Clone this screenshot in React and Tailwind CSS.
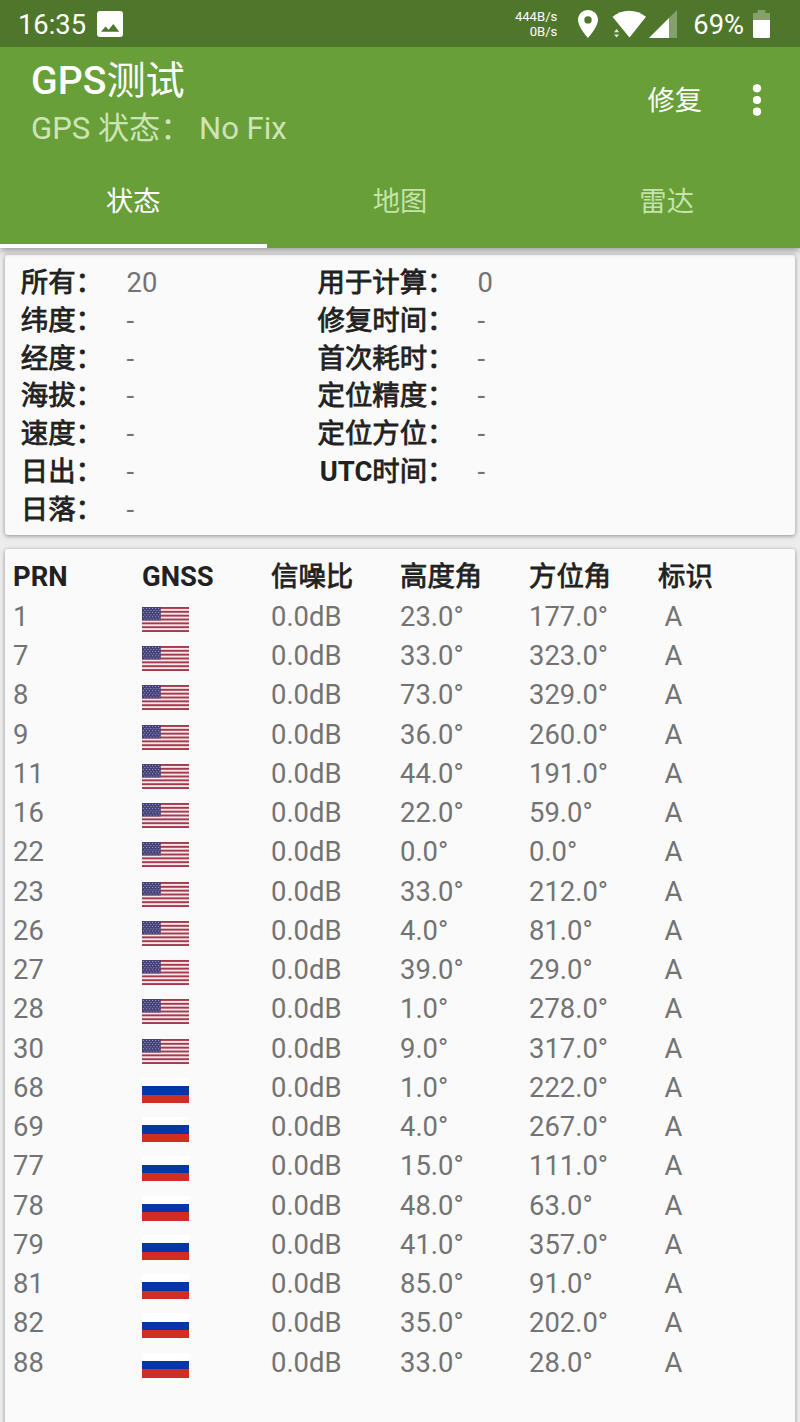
const info = [
  ['所有：', '20', '用于计算：', '0'],
  ['纬度：', '-', '修复时间：', '-'],
  ['经度：', '-', '首次耗时：', '-'],
  ['海拔：', '-', '定位精度：', '-'],
  ['速度：', '-', '定位方位：', '-'],
  ['日出：', '-', '时间：', '-', 'UTC'],
  ['日落：', '-', '', ''],
]

const satellites = [
  { prn: 1, country: 'us', elevation: '23.0°', azimuth: '177.0°' },
  { prn: 7, country: 'us', elevation: '33.0°', azimuth: '323.0°' },
  { prn: 8, country: 'us', elevation: '73.0°', azimuth: '329.0°' },
  { prn: 9, country: 'us', elevation: '36.0°', azimuth: '260.0°' },
  { prn: 11, country: 'us', elevation: '44.0°', azimuth: '191.0°' },
  { prn: 16, country: 'us', elevation: '22.0°', azimuth: '59.0°' },
  { prn: 22, country: 'us', elevation: '0.0°', azimuth: '0.0°' },
  { prn: 23, country: 'us', elevation: '33.0°', azimuth: '212.0°' },
  { prn: 26, country: 'us', elevation: '4.0°', azimuth: '81.0°' },
  { prn: 27, country: 'us', elevation: '39.0°', azimuth: '29.0°' },
  { prn: 28, country: 'us', elevation: '1.0°', azimuth: '278.0°' },
  { prn: 30, country: 'us', elevation: '9.0°', azimuth: '317.0°' },
  { prn: 68, country: 'ru', elevation: '1.0°', azimuth: '222.0°' },
  { prn: 69, country: 'ru', elevation: '4.0°', azimuth: '267.0°' },
  { prn: 77, country: 'ru', elevation: '15.0°', azimuth: '111.0°' },
  { prn: 78, country: 'ru', elevation: '48.0°', azimuth: '63.0°' },
  { prn: 79, country: 'ru', elevation: '41.0°', azimuth: '357.0°' },
  { prn: 81, country: 'ru', elevation: '85.0°', azimuth: '91.0°' },
  { prn: 82, country: 'ru', elevation: '35.0°', azimuth: '202.0°' },
  { prn: 88, country: 'ru', elevation: '33.0°', azimuth: '28.0°' },
]

const stripes = [0, 2, 4, 6, 8, 10, 12]

// Canton stars, staggered on every other row
const stars = []
for (let row = 0; row < 6; row++) {
  for (let col = 0; col < 6; col++) {
    stars.push([1.6 + col * 3 + (row % 2) * 1.3, 1.4 + row * 2.1])
  }
}

function UsFlag() {
  return (
    <svg className="w-[47px] h-[25px]" viewBox="0 0 47 25">
      <rect width="47" height="25" fill="#f8e8ec" />
      {stripes.map((i) => (
        <rect key={i} y={(i * 25) / 13} width="47" height={25 / 13} fill="#a33b4c" />
      ))}
      <rect width="18.8" height="13.46" fill="#45427a" />
      {stars.map(([x, y], i) => (
        <circle key={i} cx={x} cy={y} r="0.5" fill="#b9b8d6" />
      ))}
    </svg>
  )
}

function RuFlag() {
  return (
    <div className="w-[47px] h-[25px] flex flex-col">
      <div className="flex-1 bg-white" />
      <div className="flex-1 bg-[#0536a5]" />
      <div className="flex-1 bg-[#d22d22]" />
    </div>
  )
}

// Chinese label: regular weight thickened by a stroke, lighter than the real bold
function Label({ children }) {
  return <span className="font-normal [-webkit-text-stroke:0.8px_#212121]">{children}</span>
}

function StatusBar() {
  return (
    <div className="h-[47px] bg-[#4f772b] flex items-center pl-[18px] pr-[30px] text-white text-[27.3px]">
      <span className="pt-[3px]">16:35</span>
      <svg className="w-[26px] h-[26px] ml-[11px]" viewBox="0 0 26 26">
        <rect width="26" height="26" rx="3" fill="#fff" />
        <path d="M4 20.8 8.6 15.5 11.6 18.7 16.3 13 22.3 20.8Z" fill="#4f772b" />
      </svg>
      <div className="ml-auto text-right text-[13.1px] leading-[15.5px] pt-[1px]">
        <div>444B/s</div>
        <div>0B/s</div>
      </div>
      <svg className="w-5 h-7 ml-[21px]" viewBox="0 0 20 28">
        <path
          d="M10 0C4.5 0 0 4.3 0 9.8 0 17 10 28 10 28S20 17 20 9.8C20 4.3 15.5 0 10 0Zm0 6.2a3.7 3.7 0 1 1 0 7.4 3.7 3.7 0 0 1 0-7.4Z"
          fill="#fff"
        />
      </svg>
      <svg className="w-[34px] h-7 ml-[14px]" viewBox="0 0 34 28">
        <path d="M.5 6.8Q8 .8 17.2.8T34 6.8L17.5 27.5Z" fill="#fff" />
        <path d="M2 22.2 4.6 19 7.2 22.2ZM2 24.4 4.6 27.6 7.2 24.4Z" fill="#dfe8d6" />
      </svg>
      <svg className="w-7 h-7 ml-[3px]" viewBox="0 0 28 28">
        <path d="M28 0V28H0Z" fill="#84a06b" />
        <path d="M20 8V28H0Z" fill="#fff" />
      </svg>
      <span className="ml-4 pt-[3px]">69%</span>
      <svg className="w-[17px] h-[28px] ml-[9px]" viewBox="0 0 17 28">
        <path d="M4.6 0H12.4V3H17V11H0V3H4.6Z" fill="#84a06b" />
        <path d="M0 10H17V26.5Q17 28 15.5 28H1.5Q0 28 0 26.5Z" fill="#fff" />
      </svg>
    </div>
  )
}

function Header() {
  return (
    <header className="relative z-10 bg-[#689f38] shadow-[0_2px_8px_rgba(0,0,0,0.4)]">
      <StatusBar />
      <div className="h-[107px] flex items-center pl-[31px] text-white">
        <div className="pt-[8px]">
          <h1 className="text-[39.2px] leading-[48px] font-normal">
            <span className="font-medium">GPS</span>测试
          </h1>
          <p className="text-[31.1px] leading-[47px] text-[#cde5b6] whitespace-pre">GPS 状态： No Fix</p>
        </div>
        <button className="ml-auto text-[27.3px] pt-[2px]">修复</button>
        <svg className="w-2 h-8 ml-[51px] mr-[39px] mb-px" viewBox="0 0 8 32" overflow="visible">
          <circle cx="4" cy="4.3" r="4.1" fill="#fff" />
          <circle cx="4" cy="16" r="4.1" fill="#fff" />
          <circle cx="4" cy="27.7" r="4.1" fill="#fff" />
        </svg>
      </div>
      <nav className="grid grid-cols-3 h-[94px] text-[27.3px] text-[#c5e3aa]">
        <div className="flex items-center justify-center text-white border-b-4 border-white pt-[7px]">状态</div>
        <div className="flex items-center justify-center pt-[3px]">地图</div>
        <div className="flex items-center justify-center pt-[3px]">雷达</div>
      </nav>
    </header>
  )
}

function InfoCard() {
  return (
    <section className="h-[280px] rounded-[3px] bg-[#fafafa] shadow-[0_1px_4px_rgba(0,0,0,0.4)] pt-[10px]">
      {info.map(([label, value, label2, value2, prefix]) => (
        <div key={label} className="flex h-[37.75px] items-center leading-none">
          <span className="w-[98px] flex justify-end text-[#212121] whitespace-nowrap">
            <Label>{label}</Label>
          </span>
          <span className="w-[195px] ml-[23.5px]">{value}</span>
          <span className="w-[133px] flex justify-end text-[#212121] whitespace-nowrap">
            <span className="font-bold">{prefix}</span>
            <Label>{label2}</Label>
          </span>
          <span className="ml-[23px]">{value2}</span>
        </div>
      ))}
    </section>
  )
}

function SatelliteCard() {
  return (
    <section className="h-[900px] rounded-[3px] bg-[#fafafa] shadow-[0_1px_4px_rgba(0,0,0,0.4)] pl-2 pt-[9px]">
      <div className="grid grid-cols-[repeat(6,129px)] h-[40px] items-center text-[#212121] leading-none">
        <span className="font-bold">PRN</span>
        <span className="font-bold">GNSS</span>
        <Label>信噪比</Label>
        <Label>高度角</Label>
        <Label>方位角</Label>
        <Label>标识</Label>
      </div>
      {satellites.map((sat) => (
        <div key={sat.prn} className="grid grid-cols-[repeat(6,129px)] h-[39.25px] items-center leading-none">
          <span>{sat.prn}</span>
          <span className="pt-[3.5px]">{sat.country === 'us' ? <UsFlag /> : <RuFlag />}</span>
          <span>0.0dB</span>
          <span>{sat.elevation}</span>
          <span>{sat.azimuth}</span>
          <span className="pl-[6.5px]">A</span>
        </div>
      ))}
    </section>
  )
}

export default function App() {
  return (
    <div
      lang="zh-CN"
      className="w-[800px] h-[1422px] overflow-hidden bg-[#ececec] font-[Roboto,'Noto_Sans_CJK_SC',sans-serif]"
    >
      <Header />
      <main className="flex flex-col gap-[14px] px-[5px] pt-[7px] text-[27.4px] text-[#737373]">
        <InfoCard />
        <SatelliteCard />
      </main>
    </div>
  )
}
